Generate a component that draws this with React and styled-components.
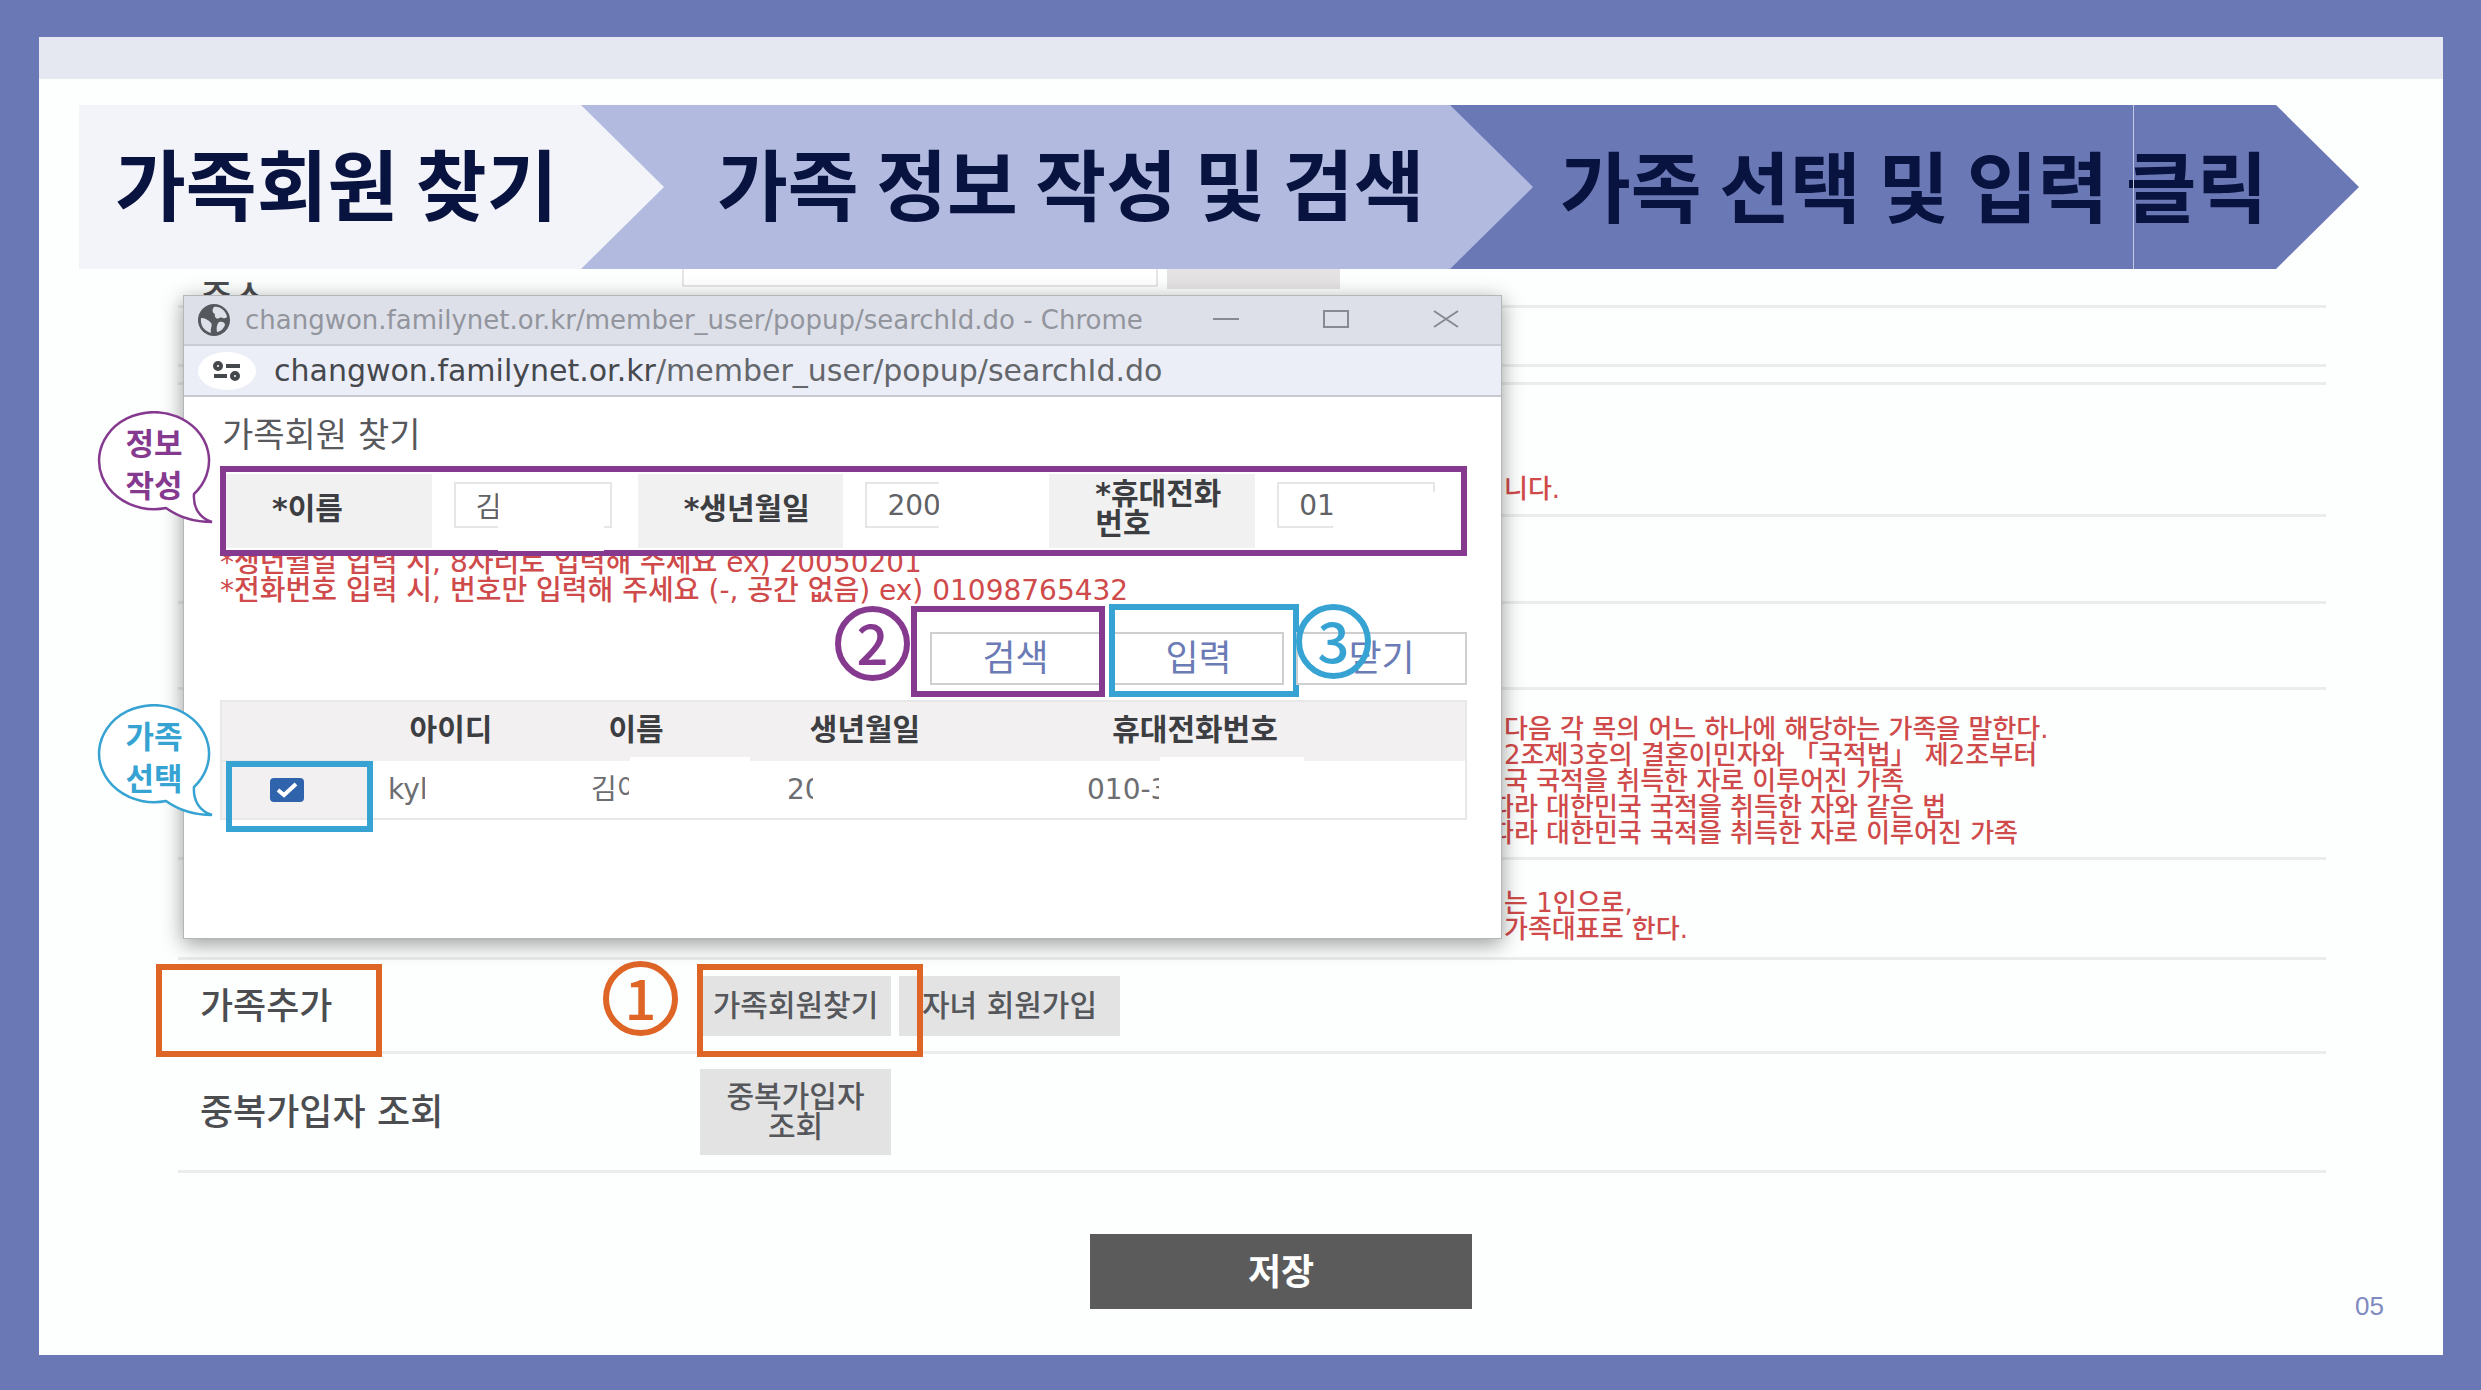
import { useState } from "react";
import styled, { createGlobalStyle } from "styled-components";

const colors = {
  frame: "#6b78b6",
  navy: "#08133f",
  purple: "#853a8f",
  blue: "#36a3d3",
  orange: "#de6526",
  red: "#cf4a4a",
};

const steps = [
  { text: "가족회원 찾기", bg: "#f3f3fa", indent: 36 },
  { text: "가족 정보 작성 및 검색", bg: "#b2bbdf", indent: 136 },
  { text: "가족 선택 및 입력 클릭", bg: "#6b78b6", indent: 110 },
];

const familyRules = [
  { text: "다음 각 목의 어느 하나에 해당하는 가족을 말한다." },
  { text: "2조제3호의 결혼이민자와 「국적법」 제2조부터" },
  { text: "국 국적을 취득한 자로 이루어진 가족" },
  { text: "따라 대한민국 국적을 취득한 자와 같은 법", cut: true },
  { text: "따라 대한민국 국적을 취득한 자로 이루어진 가족", cut: true },
];

const leaderRules = [{ text: "는 1인으로," }, { text: "가족대표로 한다." }];

function Bubble({ color, top, lines }) {
  return (
    <BubbleBox $color={color} $top={top}>
      <svg width="120" height="114" viewBox="0 0 120 114">
        <path
          d="M70 97 A55 48.500 0 1 1 98 83 C97 96 103 107 116 111 C98 111 84 107 70 97 Z"
          fill="#fff"
          stroke={color}
          strokeWidth="2.500"
        />
      </svg>
      <p>
        {lines[0]}
        <br />
        {lines[1]}
      </p>
    </BubbleBox>
  );
}

function Notes({ lines }) {
  return (
    <NoteText>
      {lines.map((line) => (
        <NoteLine key={line.text} $cut={line.cut}>
          {line.text}
        </NoteLine>
      ))}
    </NoteText>
  );
}

function Popup() {
  const [name, setName] = useState("김");
  const [birth, setBirth] = useState("200");
  const [phone, setPhone] = useState("01");
  const [checked, setChecked] = useState(true);

  return (
    <Window>
      <TitleBar>
        <svg width="34" height="34" viewBox="0 0 34 34">
          <circle cx="17" cy="17" r="16" fill="#55585d" />
          <path
            d="M4 15 C8 15 12 17 14 20 C16 22 13 25 14 30 C7 28 3 22 4 15 Z M17 4 C23 3 29 8 30 14 C27 17 25 13 22 15 C20 17 17 14 18 11 C15 10 15 6 17 4 Z M22 19 C26 18 28 20 28 22 C26 27 22 29 20 29 C19 25 20 21 22 19 Z"
            fill="#dde0e8"
          />
        </svg>
        <span>changwon.familynet.or.kr/member_user/popup/searchId.do - Chrome</span>
        <WindowButton type="button" aria-label="최소화">
          <svg width="26" height="18" viewBox="0 0 26 18">
            <path d="M0 9 H26" />
          </svg>
        </WindowButton>
        <WindowButton type="button" aria-label="최대화">
          <svg width="26" height="18" viewBox="0 0 26 18">
            <rect x="1" y="1" width="24" height="16" />
          </svg>
        </WindowButton>
        <WindowButton type="button" aria-label="창 닫기">
          <svg width="26" height="18" viewBox="0 0 26 18">
            <path d="M1 1 L25 17 M25 1 L1 17" />
          </svg>
        </WindowButton>
      </TitleBar>
      <AddressBar>
        <SiteInfo type="button" aria-label="사이트 정보">
          <svg width="32" height="20" viewBox="0 0 32 20">
            <circle cx="7" cy="5" r="3" />
            <path d="M15 5 H29 M3 15 H16" />
            <circle cx="24" cy="15" r="3" />
          </svg>
        </SiteInfo>
        <span>
          <b>changwon.familynet.or.kr</b>/member_user/popup/searchId.do
        </span>
      </AddressBar>
      <WindowBody>
        <h2>가족회원 찾기</h2>
        <SearchRow>
          <SearchLabel htmlFor="name">*이름</SearchLabel>
          <SearchCell>
            <input id="name" value={name} onChange={(e) => setName(e.target.value)} />
            <Mask $left={66} $top={14} $width={106} $height={63} />
          </SearchCell>
          <SearchLabel htmlFor="birth">*생년월일</SearchLabel>
          <SearchCell>
            <input id="birth" value={birth} onChange={(e) => setBirth(e.target.value)} />
            <Mask $left={96} $top={4} $width={104} $height={60} />
          </SearchCell>
          <SearchLabel htmlFor="phone">
            *휴대전화
            <br />
            번호
          </SearchLabel>
          <SearchCell>
            <input id="phone" value={phone} onChange={(e) => setPhone(e.target.value)} />
            <Mask $left={78} $top={18} $width={112} $height={46} />
          </SearchCell>
        </SearchRow>
        <Hint>
          *생년월일 입력 시, 8자리로 입력해 주세요 ex) 20050201
          <br />
          *전화번호 입력 시, 번호만 입력해 주세요 (-, 공간 없음) ex) 01098765432
        </Hint>
        <PopupActions>
          <ActionSlot>
            <PopupButton type="button">검색</PopupButton>
            <Highlight $color={colors.purple} $inset="-26px -4px -12px -19px" />
            <Badge $color={colors.purple} $left={-95} $top={-26}>
              2
            </Badge>
          </ActionSlot>
          <ActionSlot>
            <PopupButton type="button">입력</PopupButton>
            <Highlight $color={colors.blue} $inset="-28px -15px -12px -4px" />
          </ActionSlot>
          <ActionSlot>
            <PopupButton type="button">닫기</PopupButton>
            <Badge $color={colors.blue} $left={0} $top={-28}>
              3
            </Badge>
          </ActionSlot>
        </PopupActions>
        <ResultBox>
          <ResultTable>
            <colgroup>
              <col width="148" />
              <col width="164" />
              <col width="206" />
              <col width="252" />
              <col />
            </colgroup>
            <thead>
              <tr>
                <th aria-label="선택" />
                <th>아이디</th>
                <th>이름</th>
                <th>생년월일</th>
                <th>휴대전화번호</th>
              </tr>
            </thead>
            <tbody>
              <tr>
                <CheckCell>
                  <label>
                    <input
                      type="checkbox"
                      aria-label="가족 선택"
                      checked={checked}
                      onChange={() => setChecked(!checked)}
                    />
                    {checked && (
                      <svg width="34" height="24" viewBox="0 0 34 24">
                        <path d="M8 12 L14 17 L26 6" />
                      </svg>
                    )}
                  </label>
                  <Highlight $color={colors.blue} $inset="-1px -5px -14px 4px" />
                </CheckCell>
                <ResultCell $indent={18} $clip={37}>
                  <span>kyl</span>
                </ResultCell>
                <ResultCell $indent={58} $clip={38}>
                  <span>김이</span>
                </ResultCell>
                <ResultCell $indent={48} $clip={26}>
                  <span>20</span>
                </ResultCell>
                <ResultCell $indent={96} $clip={72}>
                  <span>010-3</span>
                </ResultCell>
              </tr>
            </tbody>
          </ResultTable>
          <Mask $left={410} $top={57} $width={120} $height={6} />
          <Mask $left={940} $top={57} $width={144} $height={6} />
        </ResultBox>
      </WindowBody>
    </Window>
  );
}

export default function App() {
  return (
    <Page>
      <GlobalStyle />
      <Slide>
        <TopStrip />
        <Steps>
          {steps.map((step, i) => (
            <Step key={step.text} $bg={step.bg} $indent={step.indent} $order={3 - i}>
              {step.text}
            </Step>
          ))}
        </Steps>
        <Workspace>
          <Form>
            <Row $height={39} $align="start">
              <RowLabel as="label" htmlFor="address">
                주소
              </RowLabel>
              <AddressField>
                <input id="address" />
                <button type="button" aria-label="주소 검색" />
              </AddressField>
            </Row>
            <Row $height={59} />
            <Row $height={18} />
            <Row $height={132} $align="end">
              <Notes lines={[{ text: "니다." }]} />
            </Row>
            <Row $height={87} />
            <Row $height={86} />
            <Row $height={170}>
              <Notes lines={familyRules} />
            </Row>
            <Row $height={100}>
              <Notes lines={leaderRules} />
            </Row>
            <Row $height={94}>
              <RowLabel>가족추가</RowLabel>
              <RowButtons>
                <GrayButton type="button" $width={191} $height={60}>
                  가족회원찾기
                </GrayButton>
                <GrayButton type="button" $width={221} $height={60}>
                  자녀 회원가입
                </GrayButton>
              </RowButtons>
              <RowHighlight $left={-22} />
              <RowHighlight $left={519} />
              <Badge $color={colors.orange} $left={425} $top={1}>
                1
              </Badge>
            </Row>
            <Row $height={119}>
              <RowLabel>중복가입자 조회</RowLabel>
              <RowButtons>
                <GrayButton type="button" $width={191} $height={86}>
                  중복가입자
                  <br />
                  조회
                </GrayButton>
              </RowButtons>
            </Row>
          </Form>
          <Popup />
          <Bubble color={colors.purple} top={142} lines={["정보", "작성"]} />
          <Bubble color={colors.blue} top={435} lines={["가족", "선택"]} />
        </Workspace>
        <Footer>
          <SaveButton type="button">저장</SaveButton>
          <span>05</span>
        </Footer>
      </Slide>
    </Page>
  );
}

const GlobalStyle = createGlobalStyle`
  * {
    box-sizing: border-box;
  }
  body {
    margin: 0;
    background: ${colors.frame};
    font-family: "DejaVu Sans", "Noto Sans CJK KR", sans-serif;
  }
  button, input {
    font-family: inherit;
    border-radius: 0;
  }
  h2, p {
    margin: 0;
  }
`;

const Page = styled.div`
  display: flex;
  min-height: 100vh;
  padding: 37px 38px 35px 39px;
  background: ${colors.frame};
`;

const Slide = styled.main`
  flex: 1;
  background: #fdfefe;
`;

const TopStrip = styled.div`
  height: 42px;
  background: #e5e8f0;
`;

const Steps = styled.div`
  display: grid;
  grid-template-columns: 502fr 869fr 909fr;
  margin: 26px 84px 0 40px;
  position: relative;
  z-index: 2;
`;

const Step = styled.div`
  position: relative;
  z-index: ${(p) => p.$order};
  display: flex;
  align-items: center;
  height: 164px;
  margin-right: -83px;
  padding-left: ${(p) => p.$indent}px;
  padding-bottom: 12px;
  background: ${(p) => p.$bg};
  clip-path: polygon(0 0, calc(100% - 83px) 0, 100% 50%, calc(100% - 83px) 100%, 0 100%);
  color: ${colors.navy};
  font-family: "Noto Sans CJK KR", sans-serif;
  font-size: 77px;
  font-weight: 700;
  white-space: nowrap;

  &:last-child {
    margin-right: 0;
    padding-bottom: 8px;
  }
  &:last-child::after {
    content: "";
    position: absolute;
    top: 0;
    right: 225px;
    width: 1px;
    height: 100%;
    background: #c3c8e4;
  }
`;

const Workspace = styled.section`
  position: relative;
`;

const Form = styled.div`
  margin: 0 117px 0 139px;
`;

const Row = styled.div`
  position: relative;
  display: flex;
  align-items: ${(p) => p.$align || "center"};
  height: ${(p) => p.$height}px;
  border-bottom: 3px solid #ececed;
`;

const RowLabel = styled.span`
  width: 504px;
  padding: 12px 0 10px 22px;
  color: #4b4d50;
  font-size: 36px;
  font-weight: 500;
  line-height: 36px;
`;

const AddressField = styled.div`
  display: flex;
  gap: 9px;

  input {
    width: 476px;
    height: 18px;
    border: 2px solid #e6e6e6;
    border-top: 0;
    background: #fff;
  }
  button {
    width: 173px;
    height: 20px;
    border: 0;
    background: #e4e2e2;
  }
`;

const RowButtons = styled.div`
  display: flex;
  gap: 8px;
  padding-left: 18px;
`;

const GrayButton = styled.button`
  width: ${(p) => p.$width}px;
  height: ${(p) => p.$height}px;
  padding: 0;
  border: 0;
  background: #e3e3e4;
  color: #55575b;
  font-size: 30px;
  font-weight: 500;
  line-height: 30px;
  white-space: nowrap;
`;

/* right of the popup window, which covers the first part of every line */
const NoteText = styled.div`
  margin-left: 1326px;
  padding: 26px 0 12px;
  color: ${colors.red};
  font-size: 26px;
  font-weight: 500;
  line-height: 26px;
  white-space: nowrap;
`;

const NoteLine = styled.p`
  margin-left: ${(p) => (p.$cut ? "-14px" : 0)};
`;

const Highlight = styled.div`
  position: absolute;
  inset: ${(p) => p.$inset};
  border: 6px solid ${(p) => p.$color};
  pointer-events: none;
`;

const RowHighlight = styled.div`
  position: absolute;
  top: 4px;
  left: ${(p) => p.$left}px;
  width: 226px;
  height: 93px;
  border: 6px solid ${colors.orange};
  pointer-events: none;
`;

const Badge = styled.span`
  position: absolute;
  left: ${(p) => p.$left}px;
  top: ${(p) => p.$top}px;
  display: flex;
  align-items: center;
  justify-content: center;
  width: 75px;
  height: 75px;
  padding-bottom: 6px;
  border: 6px solid ${(p) => p.$color};
  border-radius: 50%;
  color: ${(p) => p.$color};
  font-family: "Noto Sans CJK KR", sans-serif;
  font-size: 56px;
  font-weight: 500;
  line-height: 56px;
  pointer-events: none;
`;

const Mask = styled.div`
  position: absolute;
  left: ${(p) => p.$left}px;
  top: ${(p) => p.$top}px;
  width: ${(p) => p.$width}px;
  height: ${(p) => p.$height}px;
  background: #fff;
  pointer-events: none;
`;

const Window = styled.section`
  position: absolute;
  top: 26px;
  left: 144px;
  width: 1319px;
  border: 1px solid #b4b6ba;
  background: #fff;
  box-shadow: 0 5px 20px rgba(0, 0, 0, 0.4);
`;

const TitleBar = styled.div`
  display: flex;
  align-items: center;
  height: 50px;
  padding-left: 13px;
  border-bottom: 2px solid #c9ccd3;
  background: #dde0e8;
  color: #92959d;
  font-size: 26px;

  span {
    flex: 1;
    padding-left: 14px;
    white-space: nowrap;
  }
`;

const WindowButton = styled.button`
  width: 110px;
  height: 48px;
  padding: 0;
  border: 0;
  background: none;

  svg {
    fill: none;
    stroke: #878a90;
    stroke-width: 2;
  }
`;

const AddressBar = styled.div`
  display: flex;
  align-items: center;
  gap: 18px;
  height: 51px;
  padding-left: 14px;
  border-bottom: 2px solid #c6c8ce;
  background: #ebeef7;
  color: #63666b;
  font-size: 30px;
  white-space: nowrap;

  b {
    color: #45484d;
    font-weight: 400;
  }
`;

const SiteInfo = styled.button`
  display: flex;
  align-items: center;
  justify-content: center;
  width: 58px;
  height: 38px;
  padding: 0;
  border: 0;
  border-radius: 50%;
  background: #fff;

  svg {
    fill: none;
    stroke: #44474b;
    stroke-width: 4;
  }
`;

const WindowBody = styled.div`
  padding: 0 34px 118px 36px;

  h2 {
    padding: 21px 0 14px 2px;
    color: #57595d;
    font-size: 34px;
    font-weight: 400;
    line-height: 34px;
  }
`;

const SearchRow = styled.div`
  position: relative;
  z-index: 1;
  display: grid;
  grid-template-columns: repeat(6, 1fr);
  height: 90px;
  padding: 2px 0;
  border: 6px solid ${colors.purple};
  background: #fff;
`;

const SearchLabel = styled.label`
  display: flex;
  align-items: center;
  padding-left: 46px;
  padding-bottom: 4px;
  background: #f2f1f2;
  color: #3c3e42;
  font-size: 30px;
  font-weight: 700;
  line-height: 30px;
  white-space: nowrap;
`;

const SearchCell = styled.div`
  position: relative;
  padding: 8px 22px;

  input {
    width: 158px;
    height: 46px;
    padding: 0 20px;
    border: 2px solid #e6e6e7;
    background: #fff;
    color: #606266;
    font-size: 28px;
  }
`;

const Hint = styled.p`
  margin-top: -7px;
  color: ${colors.red};
  font-size: 28px;
  font-weight: 500;
  line-height: 28px;
  white-space: nowrap;
`;

const PopupActions = styled.div`
  display: flex;
  justify-content: flex-end;
  gap: 12px;
  margin-top: 27px;
`;

const ActionSlot = styled.div`
  position: relative;
`;

const PopupButton = styled.button`
  display: block;
  width: 171px;
  height: 53px;
  padding: 0;
  border: 2px solid #cfcfd1;
  background: #fff;
  color: #6b7bb5;
  font-size: 36px;
  line-height: 36px;
`;

const ResultBox = styled.div`
  position: relative;
  margin-top: 15px;
`;

const ResultTable = styled.table`
  width: 100%;
  table-layout: fixed;
  border-collapse: collapse;
  border: 2px solid #e9e8e9;
  font-size: 28px;

  th {
    height: 60px;
    padding: 0 0 4px;
    background: #f2f0f1;
    color: #3c3e42;
    font-size: 30px;
    line-height: 36px;
  }
  th:last-child {
    padding-right: 66px;
  }
`;

const CheckCell = styled.td`
  position: relative;
  height: 58px;
  padding: 0 0 0 48px;
  border: 2px solid #e9e8e9;
  background: #f2f0f1;

  label {
    position: relative;
    display: block;
    width: 34px;
    height: 24px;
  }
  input {
    appearance: none;
    display: block;
    width: 34px;
    height: 24px;
    margin: 0;
    border: 2px solid #2f64ad;
    border-radius: 4px;
  }
  input:checked {
    background: #2f64ad;
  }
  svg {
    position: absolute;
    inset: 0;
    fill: none;
    stroke: #fff;
    stroke-width: 4;
  }
`;

const ResultCell = styled.td`
  height: 58px;
  padding: 0 0 0 ${(p) => p.$indent}px;
  color: #6c6e72;

  span {
    display: block;
    width: ${(p) => p.$clip}px;
    overflow: hidden;
    line-height: 36px;
    white-space: nowrap;
  }
`;

const BubbleBox = styled.div`
  position: absolute;
  left: 57px;
  top: ${(p) => p.$top}px;
  color: ${(p) => p.$color};

  svg {
    display: block;
  }
  p {
    position: absolute;
    top: 10px;
    left: 0;
    width: 116px;
    font-family: "Noto Sans CJK KR", sans-serif;
    font-size: 31px;
    font-weight: 700;
    line-height: 42px;
    text-align: center;
  }
`;

const Footer = styled.footer`
  display: grid;
  grid-template-columns: 1fr auto 1fr;
  align-items: end;
  height: 85px;
  margin: 61px 59px 0 139px;

  span {
    color: #7f8ac0;
    font-family: "Liberation Sans", sans-serif;
    font-size: 26px;
    line-height: 26px;
    text-align: right;
  }
`;

const SaveButton = styled.button`
  grid-column: 2;
  align-self: start;
  width: 382px;
  height: 75px;
  padding: 0 0 6px;
  border: 0;
  background: #5c5b5b;
  color: #fff;
  font-size: 36px;
  font-weight: 700;
`;
